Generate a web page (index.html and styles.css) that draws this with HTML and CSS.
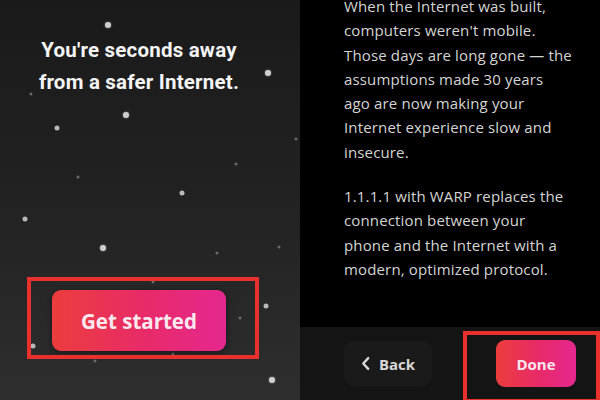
FILE: index.html
```html
<!DOCTYPE html>
<html lang="en">
<head>
<meta charset="utf-8">
<title>WARP onboarding</title>
<link rel="stylesheet" href="styles.css">
</head>
<body>
<main class="screens">
  <section class="intro">
    <div class="sky" aria-hidden="true">
      <span class="star big" style="left:108px;top:25px"></span>
      <span class="star big" style="left:268px;top:73px"></span>
      <span class="star tiny" style="left:31px;top:94px"></span>
      <span class="star big" style="left:126px;top:115px"></span>
      <span class="star mid" style="left:57px;top:128px"></span>
      <span class="star tiny" style="left:296px;top:139px"></span>
      <span class="star tiny" style="left:236px;top:164px"></span>
      <span class="star tiny" style="left:78px;top:177px"></span>
      <span class="star mid" style="left:182px;top:193px"></span>
      <span class="star mid" style="left:25px;top:219px"></span>
      <span class="star big" style="left:103px;top:248px"></span>
      <span class="star tiny" style="left:217px;top:253px"></span>
      <span class="star tiny" style="left:279px;top:247px"></span>
      <span class="star tiny" style="left:153px;top:282px"></span>
      <span class="star mid" style="left:266px;top:306px"></span>
      <span class="star tiny" style="left:240px;top:318px"></span>
      <span class="star mid" style="left:33px;top:346px"></span>
      <span class="star tiny" style="left:173px;top:354px"></span>
      <span class="star tiny" style="left:95px;top:361px"></span>
      <span class="star big" style="left:272px;top:380px"></span>
    </div>
    <h1 class="intro-title">You're seconds away<br>from a safer Internet.</h1>
    <div class="intro-action">
      <button class="btn-primary btn-start" type="button">Get started</button>
    </div>
    <div class="callout callout-start"></div>
  </section>

  <section class="details">
    <div class="details-copy">
      <p>When the Internet was built,<br>computers weren't mobile.<br>Those days are long gone — the<br>assumptions made 30 years<br>ago are now making your<br>Internet experience slow and<br>insecure.</p>
      <p>1.1.1.1 with WARP replaces the<br>connection between your<br>phone and the Internet with a<br>modern, optimized protocol.</p>
    </div>
    <footer class="details-nav">
      <button class="btn-back" type="button">
        <svg class="chevron" viewBox="0 0 10 16" width="9" height="15"><path d="M8 2 L2.5 8 L8 14" fill="none" stroke="currentColor" stroke-width="2.6" stroke-linecap="round" stroke-linejoin="round"/></svg>
        <span>Back</span>
      </button>
      <button class="btn-primary btn-done" type="button">Done</button>
    </footer>
    <div class="callout callout-done"></div>
  </section>
</main>
</body>
</html>
```

FILE: styles.css
```css
* { box-sizing: border-box; }

html, body {
  margin: 0;
  padding: 0;
  background: #000;
}

body {
  width: 600px;
  height: 400px;
  overflow: hidden;
  font-family: "Open Sans", "Noto Sans", sans-serif;
}

.screens {
  display: flex;
  width: 600px;
  height: 400px;
}

/* Left screen: starry welcome */
.intro {
  position: relative;
  width: 300px;
  height: 400px;
  background: linear-gradient(180deg, #1a1a1a 0%, #222 50%, #2e2e2e 100%);
  display: flex;
  flex-direction: column;
  padding-right: 22px;
}

.sky {
  position: absolute;
  inset: 0;
}

.star {
  position: absolute;
  border-radius: 50%;
  background: #cfcfcf;
  transform: translate(-50%, -50%);
}
.star.big  { width: 6px; height: 6px; box-shadow: 0 0 2px rgba(220,220,220,0.6); }
.star.mid  { width: 5px; height: 5px; background: #b9b9b9; }
.star.tiny { width: 3px; height: 3px; background: #6a6a6a; }

.intro-title {
  position: relative;
  margin: 34px 0 0;
  text-align: center;
  color: #f4f4f4;
  font-family: "Roboto", "Open Sans", sans-serif;
  font-size: 20.5px;
  font-weight: 700;
  line-height: 32px;
  letter-spacing: 0.2px;
}

.intro-action {
  position: relative;
  margin-top: auto;
  margin-bottom: 49px;
  display: flex;
  justify-content: center;
}

.btn-primary {
  border: 0;
  color: #fbe8ee;
  font-family: "Open Sans", "Noto Sans", sans-serif;
  font-weight: 700;
  background: linear-gradient(90deg, #ec3d3d 0%, #e82a6a 55%, #e5288f 100%);
  cursor: pointer;
}

.btn-start {
  width: 174px;
  height: 61px;
  border-radius: 9px;
  font-size: 20.5px;
  box-shadow: 0 2px 6px rgba(0,0,0,0.45);
}

/* Right screen: explanation */
.details {
  position: relative;
  width: 300px;
  height: 400px;
  background: #000;
  display: flex;
  flex-direction: column;
}

.details-copy {
  flex: 1;
  padding: 0 10px 0 44px;
  margin-top: -6px;
  color: #d4d4d4;
  font-family: "Open Sans", "Noto Sans", sans-serif;
  font-size: 15px;
  line-height: 24.3px;
  letter-spacing: 0.15px;
  white-space: nowrap;
}

.details-copy p { margin: 0 0 20px; }

.details-nav {
  height: 73px;
  background: #141414;
  display: flex;
  align-items: center;
  padding: 0 24px 0 44px;
  justify-content: space-between;
}

.btn-back {
  width: 88px;
  height: 45px;
  border: 0;
  border-radius: 9px;
  background: #1a1a1a;
  color: #d8d8d8;
  display: flex;
  align-items: center;
  justify-content: center;
  gap: 9px;
  font-family: "Open Sans", sans-serif;
  font-weight: 700;
  font-size: 15px;
}

.chevron { display: block; }

.btn-done {
  width: 80px;
  height: 47px;
  border-radius: 9px;
  font-size: 15px;
}

/* Red highlight frames drawn over the buttons */
.callout {
  position: absolute;
  border: 4px solid #e8302c;
  pointer-events: none;
}

.callout-start {
  left: 27px;
  top: 277px;
  width: 232px;
  height: 82px;
}

.callout-done {
  left: 163px;
  top: 331px;
  width: 137px;
  height: 72px;
}
```
